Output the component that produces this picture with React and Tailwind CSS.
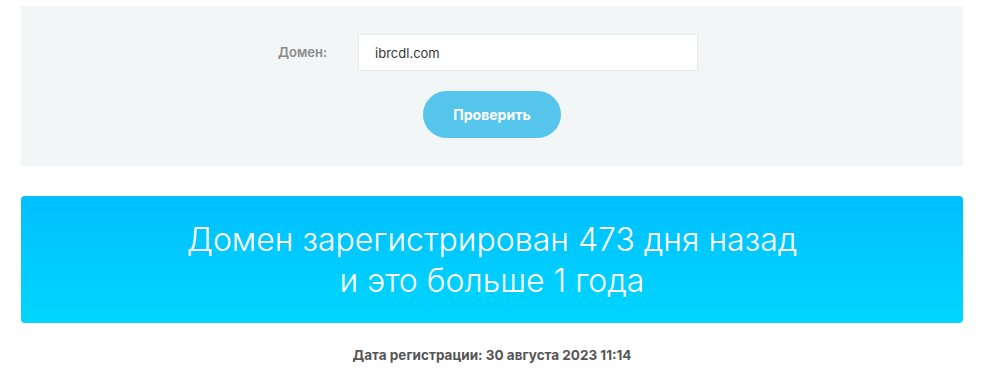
import React from "react";

const App = () => {
  return (
    <div className="w-[981px] h-[370px] bg-white pl-[21px] pr-[18px] pt-[6px] font-['Inter','Noto_Sans',sans-serif] overflow-hidden">
      {/* Form */}
      <div className="h-[160px] bg-[#f3f6f7] flex flex-col items-center pt-[28px]">
        <div className="flex items-center gap-[31px] pr-[8px]">
          <label className="text-[13px] font-semibold text-[#8a8a8a]">Домен:</label>
          <input
            defaultValue="ibrcdl.com"
            className="w-[340px] h-[37px] bg-white border border-[#e6eaec] px-[16px] text-[13px] text-[#333] outline-none"
          />
        </div>
        <button className="mt-[20px] w-[138px] h-[47px] rounded-full bg-[#55c5ec] text-white text-[14px] font-bold">
          Проверить
        </button>
      </div>

      {/* Result */}
      <div className="mt-[30px] h-[127px] rounded-[4px] bg-gradient-to-b from-[#00bfff] to-[#00d6ff] flex flex-col items-center justify-center text-white text-[32px] font-light leading-[41px]">
        <div>Домен зарегистрирован 473 дня назад</div>
        <div>и это больше 1 года</div>
      </div>

      <div className="mt-[22px] text-center text-[13.5px] font-bold text-[#555]">
        Дата регистрации: 30 августа 2023 11:14
      </div>
    </div>
  );
};

export default App;
